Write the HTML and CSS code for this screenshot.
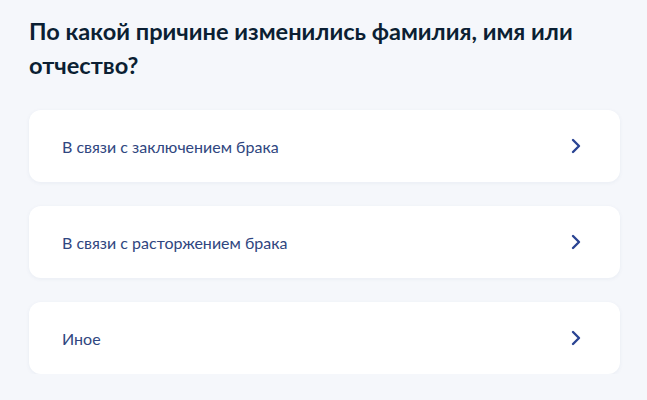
FILE: index.html
```html
<!DOCTYPE html>
<html>
  <head>
    <meta charset="UTF-8">
    <title>Причина изменения ФИО</title>
    <link rel="stylesheet" href="styles.css">
  </head>
  <body>
    <main class="question">
      <h1 class="question__title">По какой причине изменились фамилия, имя или отчество?</h1>

      <ul class="question__answers">
        <li class="answer">
          <span class="answer__text">В связи с заключением брака</span>
          <svg class="answer__arrow" viewBox="0 0 12 18" width="12" height="18">
            <path d="M3 3 L9 9 L3 15" fill="none" stroke="#2a4493" stroke-width="2.4" stroke-linecap="round" stroke-linejoin="round"/>
          </svg>
        </li>
        <li class="answer">
          <span class="answer__text">В связи с расторжением брака</span>
          <svg class="answer__arrow" viewBox="0 0 12 18" width="12" height="18">
            <path d="M3 3 L9 9 L3 15" fill="none" stroke="#2a4493" stroke-width="2.4" stroke-linecap="round" stroke-linejoin="round"/>
          </svg>
        </li>
        <li class="answer">
          <span class="answer__text">Иное</span>
          <svg class="answer__arrow" viewBox="0 0 12 18" width="12" height="18">
            <path d="M3 3 L9 9 L3 15" fill="none" stroke="#2a4493" stroke-width="2.4" stroke-linecap="round" stroke-linejoin="round"/>
          </svg>
        </li>
      </ul>
    </main>
  </body>
</html>
```

FILE: styles.css
```css
* {
  box-sizing: border-box;
}
body {
  margin: 0;
  font-family: Lato, 'Noto Sans', sans-serif;
  background-color: #f5f7fb;
  color: #0b1f33;
}

.question {
  padding: 14px 27px 0 29px;
}
.question__title {
  font-size: 23.6px;
  line-height: 34px;
  font-weight: 700;
  margin: 0 0 28px 0;
  max-width: 570px;
}

.question__answers {
  list-style: none;
  margin: 0;
  padding: 0;
  display: flex;
  flex-direction: column;
  gap: 24px;
}
.answer {
  display: flex;
  align-items: center;
  justify-content: space-between;
  height: 72px;
  padding: 0 38px 0 33px;
  background-color: #fff;
  border-radius: 12px;
  box-shadow: 0 1px 4px rgba(30, 60, 120, 0.06);
  cursor: pointer;
}
.answer__text {
  font-size: 16px;
  color: #2f4680;
}
.answer__arrow {
  display: block;
}
```
